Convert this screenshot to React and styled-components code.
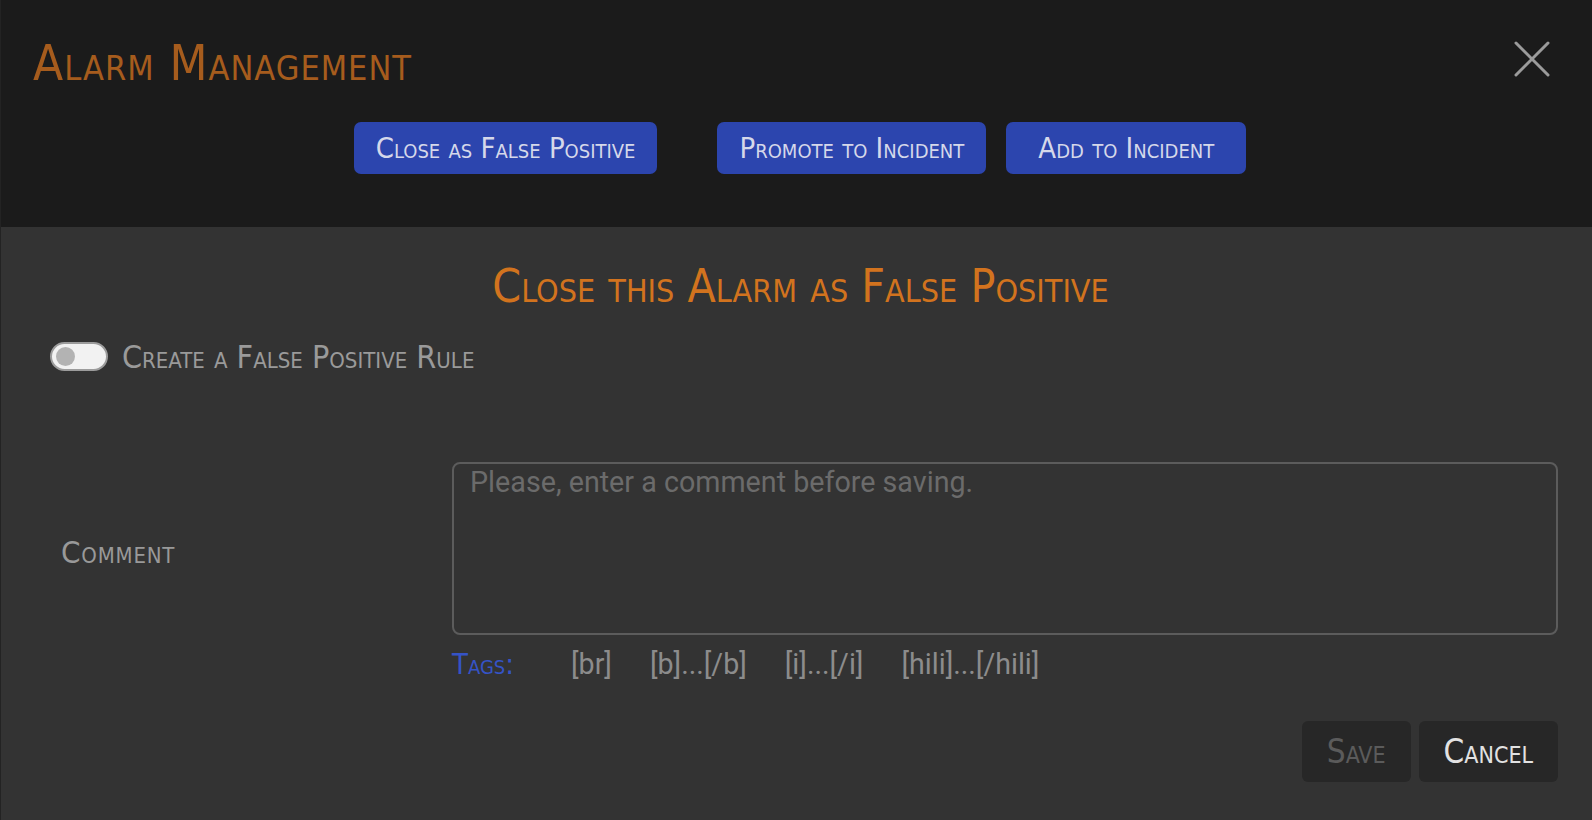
import styled, { createGlobalStyle } from 'styled-components'

const narrow = `"DejaVu Sans Condensed", "DejaVu Sans", sans-serif`;

const GlobalStyle = createGlobalStyle`
  body {
    margin: 0;
    background: #333333;
    font-family: ${narrow};
  }
`;

const Modal = styled.div`
  display: flex;
  flex-direction: column;
  height: 820px;
  border-left: 1px solid #232323;
`;

const Header = styled.div`
  background: #1b1b1b;
  height: 227px;
  box-sizing: border-box;
  padding: 39px 42px 0 32px;
`;

const HeaderTop = styled.div`
  display: flex;
  justify-content: space-between;
  align-items: flex-start;
`;

const Title = styled.h1`
  margin: 0;
  font-size: 49px;
  letter-spacing: 1px;
  line-height: 1;
  font-weight: normal;
  font-variant: small-caps;
  color: #a65c1d;
`;

const CloseButton = styled.button`
  background: none;
  border: none;
  padding: 0;
  margin-top: 2px;
  width: 36px;
  height: 36px;
  cursor: pointer;
`;

const ActionRow = styled.div`
  display: flex;
  justify-content: center;
  gap: 20px;
  margin-top: 34px;
  padding-left: 17px;
`;

const ActionButton = styled.button`
  height: 52px;
  min-width: 240px;
  padding: 0 22px;
  margin-right: ${p => (p.$spaced ? '40px' : '0')};
  background: #2c45ae;
  color: #d5d8ea;
  border: none;
  border-radius: 7px;
  font-family: ${narrow};
  font-size: 29px;
  font-variant: small-caps;
  cursor: pointer;
`;

const Body = styled.div`
  flex: 1;
  padding: 36px 34px 0;
`;

const Subtitle = styled.h2`
  margin: 0;
  padding-left: 8px;
  text-align: center;
  font-size: 46px;
  line-height: 1;
  font-weight: normal;
  font-variant: small-caps;
  color: #d2731e;
`;

const ToggleRow = styled.label`
  display: flex;
  align-items: center;
  gap: 14px;
  height: 29px;
  margin-top: 33px;
  padding-left: 15px;
  color: #9a9a9a;
  font-size: 32px;
  font-variant: small-caps;
`;

const Track = styled.span`
  position: relative;
  width: 58px;
  height: 29px;
  box-sizing: border-box;
  border-radius: 15px;
  background: #f2f2f2;
  border: 2px solid #9c9c9c;
`;

const Knob = styled.span`
  position: absolute;
  left: 4px;
  top: 3px;
  width: 19px;
  height: 19px;
  border-radius: 50%;
  background: #b3b3b3;
`;

const CommentGrid = styled.div`
  display: grid;
  grid-template-columns: 417px 1fr;
  margin-top: 91px;
`;

const FieldLabel = styled.div`
  display: flex;
  align-items: center;
  padding: 7px 0 0 26px;
  color: #999;
  font-size: 31px;
  letter-spacing: 0.8px;
  font-variant: small-caps;
`;

const CommentBox = styled.textarea`
  height: 173px;
  box-sizing: border-box;
  resize: none;
  background: transparent;
  border: 2px solid #5c5c5c;
  border-radius: 8px;
  padding: 1px 16px;
  color: #ccc;
  font-family: Roboto, sans-serif;
  font-size: 28.7px;
  &::placeholder {
    color: #6b6b6b;
  }
`;

const Tags = styled.div`
  grid-column: 2;
  display: flex;
  align-items: center;
  gap: 38px;
  margin-top: 14px;
  height: 30px;
  font-family: Roboto, sans-serif;
  font-size: 28.6px;
  color: #8c8c8c;
`;

const TagsLabel = styled.span`
  width: 81px;
  color: #3553c6;
  font-family: ${narrow};
  font-size: 29px;
  font-variant: small-caps;
`;

const Footer = styled.div`
  display: flex;
  justify-content: flex-end;
  gap: 8px;
  margin-top: 42px;
`;

const FooterButton = styled.button`
  height: 61px;
  padding: 0 25px;
  background: #272727;
  color: ${p => (p.disabled ? '#5b5b5b' : '#e2e2e2')};
  border: none;
  border-radius: 6px;
  font-family: ${narrow};
  font-size: 33px;
  font-variant: small-caps;
`;

const App = () => {
  return (
    <>
      <GlobalStyle />
      <Modal>
        <Header>
          <HeaderTop>
            <Title>Alarm Management</Title>
            <CloseButton aria-label="Close">
              <svg width="36" height="36" viewBox="0 0 36 36">
                <path d="M2 2 L34 34 M34 2 L2 34" stroke="#9b9b9b" strokeWidth="3" strokeLinecap="round" />
              </svg>
            </CloseButton>
          </HeaderTop>
          <ActionRow>
            <ActionButton $spaced>Close as False Positive</ActionButton>
            <ActionButton>Promote to Incident</ActionButton>
            <ActionButton>Add to Incident</ActionButton>
          </ActionRow>
        </Header>
        <Body>
          <Subtitle>Close this Alarm as False Positive</Subtitle>
          <ToggleRow>
            <Track>
              <Knob />
            </Track>
            Create a False Positive Rule
          </ToggleRow>
          <CommentGrid>
            <FieldLabel>Comment</FieldLabel>
            <CommentBox placeholder="Please, enter a comment before saving." />
            <Tags>
              <TagsLabel>Tags:</TagsLabel>
              <span>[br]</span>
              <span>[b]...[/b]</span>
              <span>[i]...[/i]</span>
              <span>[hili]...[/hili]</span>
            </Tags>
          </CommentGrid>
          <Footer>
            <FooterButton disabled>Save</FooterButton>
            <FooterButton>Cancel</FooterButton>
          </Footer>
        </Body>
      </Modal>
    </>
  )
}

export default App
